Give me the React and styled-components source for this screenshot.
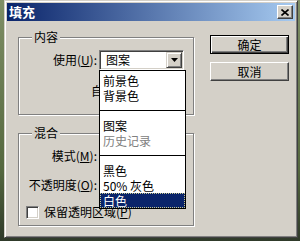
import React from "react";
import styled, { createGlobalStyle } from "styled-components";

const GlobalStyle = createGlobalStyle`
  html, body {
    margin: 0;
    padding: 0;
    background: #4a5a40;
  }
  body {
    font-family: "Noto Sans CJK SC", "Liberation Sans", sans-serif;
    font-size: 12px;
    color: #000;
  }
  * { box-sizing: border-box; }
`;

const Desktop = styled.div`
  width: 300px;
  height: 241px;
  padding-left: 4px;
  background: linear-gradient(to bottom, #7f8f66, #55683f 70%, #2f3a2a);
  overflow: hidden;
`;

const Window = styled.div`
  width: 294px;
  height: 238px;
  background: #d4d0c8;
  border: 1px solid;
  border-color: #d4d0c8 #404040 #404040 #d4d0c8;
  box-shadow: inset 1px 1px 0 #fff, inset -1px -1px 0 #808080;
  padding: 2px;
  display: flex;
  flex-direction: column;
`;

const TitleBar = styled.div`
  height: 18px;
  display: flex;
  align-items: center;
  justify-content: space-between;
  padding: 0 2px 0 2px;
  background: linear-gradient(to right, #0a246a, #a6caf0);
`;

const Title = styled.span`
  color: #fff;
  font-weight: bold;
  font-size: 13px;
  line-height: 18px;
`;

const CloseButton = styled.div`
  width: 16px;
  height: 14px;
  background: #d4d0c8;
  border: 1px solid;
  border-color: #fff #404040 #404040 #fff;
  box-shadow: inset -1px -1px 0 #808080;
  display: flex;
  align-items: center;
  justify-content: center;
`;

const Body = styled.div`
  flex: 1;
  display: flex;
  padding-left: 11px;
`;

const LeftColumn = styled.div`
  display: flex;
  flex-direction: column;
  width: 177px;
`;

const GroupBox = styled.div`
  position: relative;
  width: 176px;
  height: ${(p) => p.$h}px;
  margin-top: ${(p) => p.$mt}px;
  padding-top: 12px;
  border: 1px solid #808080;
  box-shadow: inset 1px 1px 0 #fff, 1px 1px 0 #fff;
  display: flex;
  flex-direction: column;
  gap: ${(p) => p.$gap}px;
`;

const Caption = styled.span`
  position: absolute;
  top: -8px;
  left: 13px;
  padding: 0 2px;
  line-height: 14px;
  background: #d4d0c8;
`;

const Row = styled.div`
  display: flex;
  align-items: center;
  height: ${(p) => p.$h || 20}px;
  gap: 2px;
`;

const Label = styled.span`
  width: 78px;
  text-align: right;
  white-space: nowrap;
  line-height: 14px;
`;

const ComboWrap = styled.div`
  position: relative;
  width: ${(p) => p.$w || 85}px;
`;

const Combo = styled.div`
  height: 20px;
  width: 100%;
  background: #fff;
  border: 1px solid;
  border-color: #808080 #fff #fff #808080;
  box-shadow: inset 1px 1px 0 #404040, inset -1px -1px 0 #d4d0c8;
  padding: 1px;
  display: flex;
  align-items: center;
`;

const ComboText = styled.span`
  flex: 1;
  padding-left: 5px;
  line-height: 14px;
`;

const DropButton = styled.div`
  width: 16px;
  height: 16px;
  background: #d4d0c8;
  border: 1px solid;
  border-color: #d4d0c8 #404040 #404040 #d4d0c8;
  box-shadow: inset 1px 1px 0 #fff, inset -1px -1px 0 #808080;
  display: flex;
  align-items: center;
  justify-content: center;
`;

const Field = styled.div`
  width: 40px;
  height: 20px;
  background: #fff;
  border: 1px solid;
  border-color: #808080 #fff #fff #808080;
  box-shadow: inset 1px 1px 0 #404040;
`;

const Swatch = styled.span`
  margin-left: 72px;
  line-height: 14px;
  white-space: nowrap;
`;

const CheckRow = styled.div`
  display: flex;
  align-items: center;
  height: 16px;
  padding-left: 7px;
  gap: 5px;
`;

const CheckBox = styled.span`
  width: 13px;
  height: 13px;
  background: #fff;
  border: 1px solid;
  border-color: #808080 #fff #fff #808080;
  box-shadow: inset 1px 1px 0 #404040, inset -1px -1px 0 #d4d0c8;
`;

const CheckLabel = styled.span`
  line-height: 14px;
  white-space: nowrap;
`;

const ListBox = styled.div`
  position: absolute;
  top: 100%;
  left: 0;
  width: 87px;
  height: 139px;
  background: #fff;
  border: 1px solid #000;
  padding-top: 2px;
  z-index: 5;
  display: flex;
  flex-direction: column;
`;

const Item = styled.div`
  height: 15px;
  line-height: 15px;
  padding-left: 3px;
  white-space: nowrap;
  color: ${(p) => (p.$disabled ? "#808080" : p.$active ? "#fff" : "#000")};
  background: ${(p) => (p.$active ? "#0a246a" : "transparent")};
  outline: ${(p) => (p.$active ? "1px dotted #c8c890" : "none")};
  outline-offset: -1px;
`;

const Separator = styled.div`
  height: 15px;
  display: flex;
  align-items: center;
  &::after {
    content: "";
    flex: 1;
    height: 1px;
    background: #000;
  }
`;

const ButtonColumn = styled.div`
  display: flex;
  flex-direction: column;
  gap: 8px;
  margin-left: 15px;
  padding-top: 14px;
`;

const Button = styled.div`
  width: 79px;
  height: 19px;
  background: #d4d0c8;
  display: flex;
  align-items: center;
  justify-content: center;
  line-height: 14px;
  border: 1px solid;
  border-color: ${(p) => (p.$default ? "#000" : "#fff #404040 #404040 #fff")};
  box-shadow: ${(p) =>
    p.$default
      ? "inset 1px 1px 0 #fff, inset -1px -1px 0 #404040, inset -2px -2px 0 #808080"
      : "inset -1px -1px 0 #808080"};
`;

const Arrow = () => (
  <svg width="7" height="4" viewBox="0 0 7 4">
    <path d="M0 0h7L3.5 4z" fill="#000" />
  </svg>
);

const CloseGlyph = () => (
  <svg width="8" height="7" viewBox="0 0 8 7">
    <path d="M0.5 0.5L7.5 6.5M7.5 0.5L0.5 6.5" stroke="#000" strokeWidth="1.6" />
  </svg>
);

export default function App() {
  return (
    <Desktop>
      <GlobalStyle />
      <Window>
        <TitleBar>
          <Title>填充</Title>
          <CloseButton>
            <CloseGlyph />
          </CloseButton>
        </TitleBar>
        <Body>
          <LeftColumn>
            <GroupBox $h={78} $mt={16} $gap={13}>
              <Caption>内容</Caption>
              <Row>
                <Label>
                  使用(<u>U</u>):
                </Label>
                <ComboWrap>
                  <Combo>
                    <ComboText>图案</ComboText>
                    <DropButton>
                      <Arrow />
                    </DropButton>
                  </Combo>
                  <ListBox>
                    <Item>前景色</Item>
                    <Item>背景色</Item>
                    <Separator />
                    <Item>图案</Item>
                    <Item $disabled>历史记录</Item>
                    <Separator />
                    <Item>黑色</Item>
                    <Item>50% 灰色</Item>
                    <Item $active>白色</Item>
                  </ListBox>
                </ComboWrap>
              </Row>
              <Row $h={16}>
                <Swatch>自定图案:</Swatch>
              </Row>
            </GroupBox>
            <GroupBox $h={93} $mt={18} $gap={9}>
              <Caption>混合</Caption>
              <Row>
                <Label>
                  模式(<u>M</u>):
                </Label>
                <ComboWrap>
                  <Combo>
                    <ComboText />
                    <DropButton>
                      <Arrow />
                    </DropButton>
                  </Combo>
                </ComboWrap>
              </Row>
              <Row>
                <Label>
                  不透明度(<u>O</u>):
                </Label>
                <Field />
              </Row>
              <CheckRow>
                <CheckBox />
                <CheckLabel>
                  保留透明区域(<u>P</u>)
                </CheckLabel>
              </CheckRow>
            </GroupBox>
          </LeftColumn>
          <ButtonColumn>
            <Button $default>确定</Button>
            <Button>取消</Button>
          </ButtonColumn>
        </Body>
      </Window>
    </Desktop>
  );
}
